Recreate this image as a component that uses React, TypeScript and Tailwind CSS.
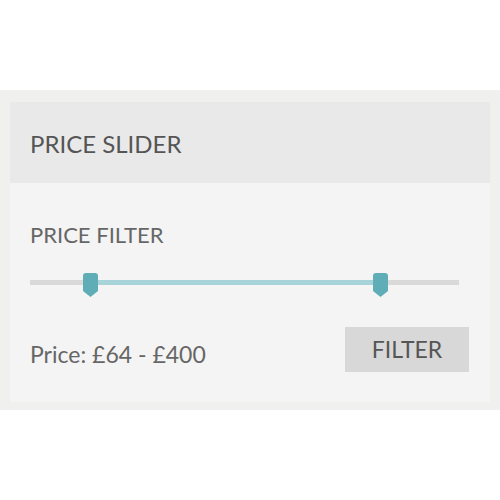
const FONT = "font-['Lato','Open_Sans',sans-serif]";

function Handle() {
  return (
    <svg className="shrink-0" width="15" height="25" viewBox="0 0 15 25">
      <path d="M0 3 Q0 0 3 0 L12 0 Q15 0 15 3 L15 18 L7.5 24 L0 18 Z" fill="#5fadb7" />
    </svg>
  );
}

function RangeTrack() {
  return (
    <div className="flex items-start">
      <div className="mt-[7px] h-[5px] w-[53px] bg-[#d9d9d9]" />
      <Handle />
      <div className="mt-[7px] h-[5px] flex-1 bg-[#a8d4d9]" />
      <Handle />
      <div className="mt-[7px] h-[5px] w-[71px] bg-[#d9d9d9]" />
    </div>
  );
}

export default function App() {
  return (
    <div className={`w-[500px] h-[500px] bg-white pt-[90px] ${FONT}`}>
      <div className="bg-[#f0f0ee] px-[10px] pt-[12px] pb-[8px]">
        <div className="h-[81px] bg-[#e9e9e9] flex items-center px-[20px] pt-[2px]">
          <h3 className="text-[24px] text-[#555]">PRICE SLIDER</h3>
        </div>
        <div className="bg-[#f4f4f4] px-[20px] pt-[41px] pb-[30px]">
          <h4 className="text-[22px] text-[#666] leading-none">PRICE FILTER</h4>
          <div className="mt-[27px] pr-[11px]">
            <RangeTrack />
          </div>
          <div className="mt-[29px] flex items-center justify-between pr-[1px]">
            <span className="text-[23px] text-[#666] mt-[10px]">Price: £64 - £400</span>
            <button className="w-[124px] h-[45px] bg-[#d8d8d8] text-[23px] text-[#555]">FILTER</button>
          </div>
        </div>
      </div>
    </div>
  );
}
